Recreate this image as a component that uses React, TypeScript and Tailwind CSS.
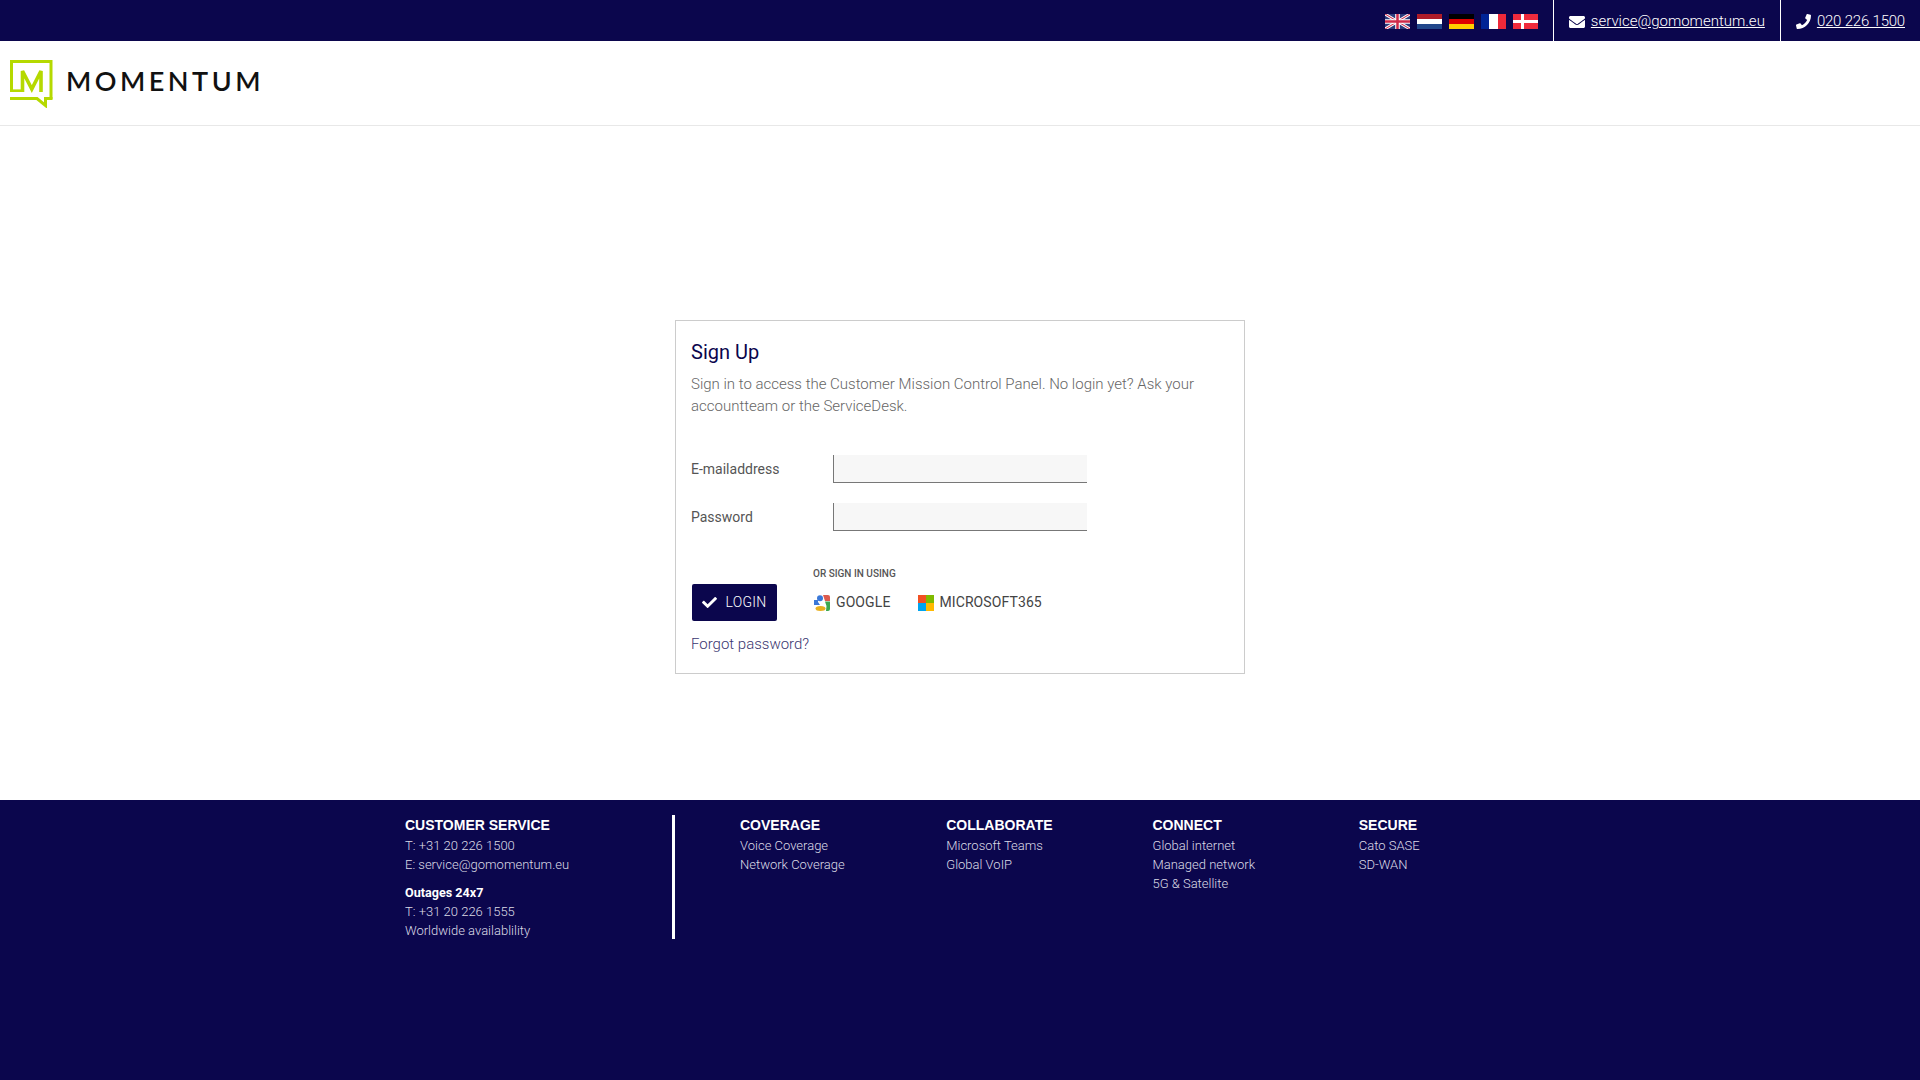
import React from 'react';
import { FaCheck, FaEnvelope, FaPhone } from 'react-icons/fa';

const UkFlag = () => (
  <svg viewBox="0 0 60 36" className="w-[25px] h-[15px]">
    <rect width="60" height="36" fill="#2b3a7a" />
    <path d="M0 0L60 36M60 0L0 36" stroke="#fff" strokeWidth="7" />
    <path d="M0 0L60 36M60 0L0 36" stroke="#cf2a4a" strokeWidth="2.5" />
    <path d="M30 0V36M0 18H60" stroke="#fff" strokeWidth="11" />
    <path d="M30 0V36M0 18H60" stroke="#cf2a4a" strokeWidth="6" />
  </svg>
);

const StripeFlag = ({ colors, vertical }: { colors: string[]; vertical?: boolean }) => (
  <div className={`w-[25px] h-[15px] flex ${vertical ? 'flex-row' : 'flex-col'}`}>
    {colors.map((color) => (
      <div key={color} className="flex-1" style={{ backgroundColor: color }} />
    ))}
  </div>
);

const DkFlag = () => (
  <svg viewBox="0 0 25 15" className="w-[25px] h-[15px]">
    <rect width="25" height="15" fill="#ef2b3d" />
    <path d="M8 0h3v15H8zM0 6h25v3H0z" fill="#fff" />
  </svg>
);

const MomentumMark = () => (
  <svg viewBox="0 0 43 48" className="w-[43px] h-[48px] mt-[2px]" fill="none" stroke="#b5d900">
    <path d="M1.5 32V1.5H41V39" strokeWidth="3" />
    <path d="M0 38.5H27L35.5 45.5V38.5H42.5" strokeWidth="3" />
    <path d="M0 30.7H12.5" strokeWidth="2.6" />
    <path d="M12.5 32V11L21.8 29L31 11V32" strokeWidth="3.6" />
  </svg>
);

const GoogleIcon = () => (
  <svg viewBox="0 0 16 16" className="w-4 h-4 ml-px">
    <path d="M9 0H14Q16 0 16 2V6L11 6Z" fill="#dd5b4e" />
    <path d="M11 6.5H16V14Q16 16 14 16H12L12.5 11Z" fill="#3da84f" />
    <circle cx="6" cy="3.2" r="3" fill="#3a78d8" />
    <path d="M0 5H4V7L6 10H0Z" fill="#3a78d8" />
    <ellipse cx="6.5" cy="13.5" rx="5" ry="2.5" fill="#e8b020" />
  </svg>
);

const MicrosoftIcon = () => (
  <div className="grid grid-cols-2 w-4 h-4">
    <div className="bg-[#f25022]" />
    <div className="bg-[#7fba00]" />
    <div className="bg-[#00a4ef]" />
    <div className="bg-[#ffb900]" />
  </div>
);

const FOOTER_COLUMNS = [
  { title: 'COVERAGE', links: ['Voice Coverage', 'Network Coverage'] },
  { title: 'COLLABORATE', links: ['Microsoft Teams', 'Global VoIP'] },
  { title: 'CONNECT', links: ['Global internet', 'Managed network', '5G & Satellite'] },
  { title: 'SECURE', links: ['Cato SASE', 'SD-WAN'] },
];

const FooterHeading = ({ children }: { children: React.ReactNode }) => (
  <h4 className="font-['Liberation_Sans',sans-serif] text-[14px] leading-[21px] font-bold text-white">{children}</h4>
);

const App: React.FC = () => {
  return (
    <div className="min-h-screen flex flex-col bg-white font-['Roboto',sans-serif] font-light">
      {/* Top bar */}
      <div className="h-[41px] bg-[#0b064d] flex justify-end text-white text-[15px]">
        <div className="flex items-center gap-[7px] pr-[15px] pt-[2px]">
          <UkFlag />
          <StripeFlag colors={['#ae1c28', '#ffffff', '#21468b']} />
          <StripeFlag colors={['#000000', '#dd0000', '#ffce00']} />
          <StripeFlag colors={['#002395', '#ffffff', '#ed2939']} vertical />
          <DkFlag />
        </div>
        <div className="flex items-center gap-[6px] px-[15px] pt-[2px] border-l border-white">
          <FaEnvelope className="w-[16px] h-[16px]" />
          <a className="underline">service@gomomentum.eu</a>
        </div>
        <div className="flex items-center gap-[6px] px-[15px] pt-[2px] border-l border-white">
          <FaPhone className="w-[15px] h-[15px]" />
          <a className="underline tracking-[-0.2px]">020 226 1500</a>
        </div>
      </div>

      {/* Header */}
      <div className="h-[85px] border-b border-[#e8e8e8] flex items-center pl-[10px] gap-[13px]">
        <MomentumMark />
        <span className="mb-[4px] font-['Lato',sans-serif] font-semibold text-[27px] tracking-[3.5px] text-[#111]">MOMENTUM</span>
      </div>

      {/* Login card */}
      <div className="flex-1 pt-[194px]">
        <div className="mx-auto w-[570px] h-[354px] border border-[#ccc] px-[15px] pt-[19px]">
          <h2 className="text-[20px] leading-[24px] font-normal text-[#0b064d]">Sign Up</h2>
          <p className="mt-[9px] text-[15px] leading-[22px] text-[#666]">
            Sign in to access the Customer Mission Control Panel. No login yet? Ask your accountteam or the ServiceDesk.
          </p>
          <div className="mt-[38px] flex items-center h-[28px]">
            <label className="w-[142px] text-[14px] font-normal text-[#555]">E-mailaddress</label>
            <input className="w-[254px] h-[28px] bg-[#f7f7f7] border-l border-b border-[#777]" />
          </div>
          <div className="mt-[20px] flex items-center h-[28px]">
            <label className="w-[142px] text-[14px] font-normal text-[#555]">Password</label>
            <input type="password" className="w-[254px] h-[28px] bg-[#f7f7f7] border-l border-b border-[#777]" />
          </div>
          <div className="mt-[37px] flex items-end">
            <button className="ml-px w-[85px] h-[37px] bg-[#0b064d] rounded-[2px] text-white text-[14px] tracking-[0.3px] flex items-center justify-center gap-[8px]">
              <FaCheck className="w-[15px] h-[15px]" />
              LOGIN
            </button>
            <div className="ml-[36px] pb-[8px]">
              <div className="text-[10px] leading-[12px] font-medium text-[#555]">OR SIGN IN USING</div>
              <div className="mt-[12px] flex items-center text-[14px] tracking-[0.1px] font-normal text-[#444]">
                <GoogleIcon />
                <span className="ml-[6px]">GOOGLE</span>
                <span className="ml-[28px]"><MicrosoftIcon /></span>
                <span className="ml-[5px]">MICROSOFT365</span>
              </div>
            </div>
          </div>
          <a className="block mt-[11px] text-[15px] leading-[24px] text-[#3a3670]">Forgot password?</a>
        </div>
      </div>

      {/* Footer */}
      <div className="h-[280px] bg-[#0b064d] flex items-start pl-[405px] pt-[15px] text-[13px] leading-[19px] text-[#dcdbe6]">
        <div className="w-[270px] h-[124px] border-r-[3px] border-white">
          <FooterHeading>CUSTOMER SERVICE</FooterHeading>
          <div>T: +31 20 226 1500</div>
          <div>E: service@gomomentum.eu</div>
          <div className="mt-[10px] text-[12.6px] font-bold text-white leading-[18px]">Outages 24x7</div>
          <div>T: +31 20 226 1555</div>
          <div>Worldwide availablility</div>
        </div>
        <div className="ml-[65px] grid grid-cols-[206.25px_206.25px_206.25px_206.25px]">
          {FOOTER_COLUMNS.map((col) => (
            <div key={col.title}>
              <FooterHeading>{col.title}</FooterHeading>
              {col.links.map((link) => (
                <div key={link}>{link}</div>
              ))}
            </div>
          ))}
        </div>
      </div>
    </div>
  );
};

export default App;
